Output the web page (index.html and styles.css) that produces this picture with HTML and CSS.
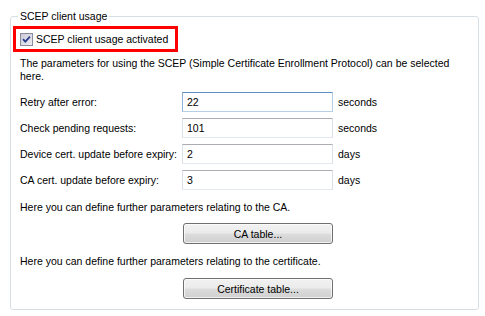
FILE: index.html
```html
<!DOCTYPE html>
<html lang="en">
<head>
  <meta charset="UTF-8" />
  <title>SCEP client usage</title>
  <link rel="stylesheet" href="styles.css">
</head>
<body>

<fieldset class="group">
  <legend>SCEP client usage</legend>

  <!-- Activation checkbox (highlighted) -->
  <label class="check highlight">
    <svg class="box" width="13" height="13" viewBox="0 0 13 13">
      <defs>
        <linearGradient id="boxFill" x1="0" y1="0" x2="1" y2="1">
          <stop offset="0" stop-color="#c9cad6" />
          <stop offset="1" stop-color="#eeeef3" />
        </linearGradient>
      </defs>
      <rect x="0.5" y="0.5" width="12" height="12" fill="url(#boxFill)" stroke="#8a8c9c" />
      <path d="M3 6.2 L5.3 8.6 L10 3.6" fill="none" stroke="#2b3f8c" stroke-width="1.8" />
    </svg>
    <span>SCEP client usage activated</span>
  </label>

  <p class="intro">The parameters for using the SCEP (Simple Certificate Enrollment Protocol) can be selected here.</p>

  <!-- Parameter rows -->
  <div class="params">
    <label for="retry">Retry after error:</label>
    <input type="text" id="retry" class="hot" value="22" />
    <span class="unit">seconds</span>

    <label for="pending">Check pending requests:</label>
    <input type="text" id="pending" value="101" />
    <span class="unit">seconds</span>

    <label for="devCert">Device cert. update before expiry:</label>
    <input type="text" id="devCert" value="2" />
    <span class="unit">days</span>

    <label for="caCert">CA cert. update before expiry:</label>
    <input type="text" id="caCert" value="3" />
    <span class="unit">days</span>
  </div>

  <p class="note">Here you can define further parameters relating to the CA.</p>
  <div class="actions">
    <button type="button" class="btn">CA table...</button>
  </div>

  <p class="note">Here you can define further parameters relating to the certificate.</p>
  <div class="actions">
    <button type="button" class="btn">Certificate table...</button>
  </div>
</fieldset>

</body>
</html>
```
FILE: styles.css
```css
*, *::before, *::after { box-sizing: border-box; }

:root {
  --text:        #000000;
  --group-line:  #d5dfe5;
  --field-top:   #abadb3;
  --field-side:  #dbdfe6;
  --field-bot:   #e3e9ef;
  --hot-top:     #5b8ec1;
  --hot-side:    #b5cfe7;
  --btn-line:    #707070;
  --mark:        #ff0000;
}

body {
  margin: 0;
  padding: 0 6px 0 10px;
  background: #ffffff;
  color: var(--text);
  font-family: "Liberation Sans", Arial, sans-serif;
  font-size: 10.5px;
  line-height: 13px;
}

.group {
  margin: 10px 0 0;
  padding: 0 9px 10px 9px;
  border: 1px solid var(--group-line);
  border-radius: 3px;
  min-width: 0;
}

.group legend {
  padding: 0 2px;
  margin-left: -2px;
}

.check {
  display: inline-flex;
  align-items: center;
  gap: 3px;
}

.highlight {
  margin: 3px 0 0 -7px;
  padding: 0 7px 0 4px;
  height: 26px;
  border: 3px solid var(--mark);
}

.check .box { display: block; }

.intro {
  margin: 5px 0 0;
}

.params {
  display: grid;
  grid-template-columns: 157px 151px 1fr;
  column-gap: 5px;
  row-gap: 6px;
  align-items: center;
  justify-items: start;
  margin-top: 9px;
  white-space: nowrap;
}

.params input {
  width: 151px;
  height: 20px;
  margin: 0;
  padding: 0 4px;
  border: 1px solid var(--field-side);
  border-top-color: var(--field-top);
  border-bottom-color: var(--field-bot);
  font-family: inherit;
  font-size: 10.5px;
  color: var(--text);
  outline: none;
}

.params input.hot {
  border-color: var(--hot-side);
  border-top-color: var(--hot-top);
  border-left-color: #8fb1d6;
}

.note {
  margin: 11px 0 0;
}

.actions {
  margin: 9px 0 0 163px;
}

.actions:last-child { margin-top: 10px; }

.btn {
  display: block;
  width: 150px;
  height: 21px;
  padding: 0;
  border: 1px solid var(--btn-line);
  border-radius: 3px;
  background: linear-gradient(#f2f2f2 0%, #ebebeb 48%, #dddddd 52%, #cfcfcf 100%);
  box-shadow: inset 0 0 0 1px rgba(255, 255, 255, 0.7);
  font-family: inherit;
  font-size: 10.5px;
  color: var(--text);
  cursor: pointer;
}

.actions + .note { margin-top: 11px; }
```
